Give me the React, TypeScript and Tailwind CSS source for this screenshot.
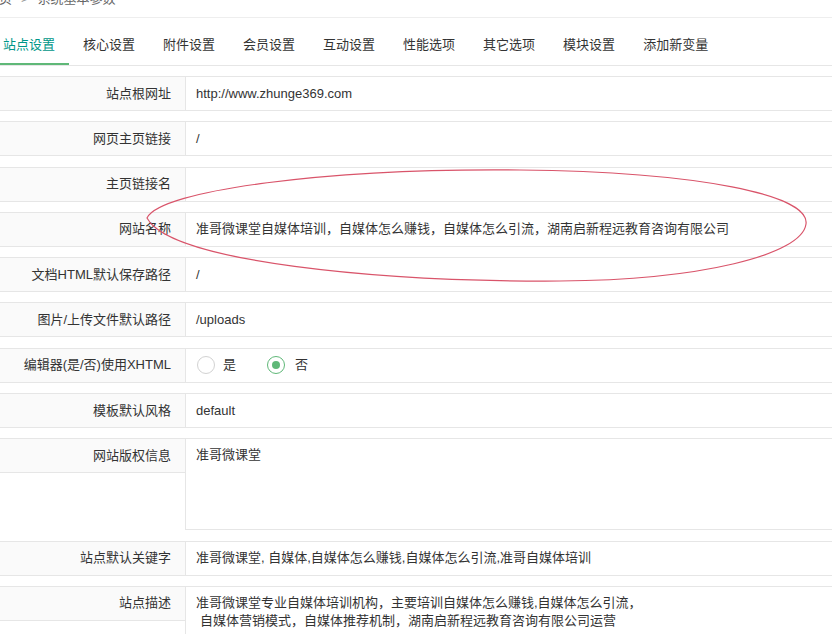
import React from "react";

const tabs = ["站点设置", "核心设置", "附件设置", "会员设置", "互动设置", "性能选项", "其它选项", "模块设置", "添加新变量"];

function Label({ text }: { text: string }) {
  return (
    <div className="w-[188px] h-[35px] shrink-0 flex items-center justify-end pr-[14px] bg-[#fafafa] border border-[#e6e6e6] text-[#333] leading-[18px]">
      {text}
    </div>
  );
}

function Row({ label, children }: { label: string; children?: React.ReactNode }) {
  return (
    <div className="flex mb-[10.3px]">
      <Label text={label} />
      <div className="flex-1 h-[35px] flex items-center px-[10px] border border-l-0 border-[#e6e6e6] bg-white text-[#333] leading-[18px] whitespace-nowrap">
        {children}
      </div>
    </div>
  );
}

function Radio({ checked, text, className }: { checked?: boolean; text: string; className?: string }) {
  return (
    <div className={"flex items-center " + (className ?? "")}>
      <span
        className={
          "w-[18px] h-[18px] rounded-full flex items-center justify-center " +
          (checked ? "border-[1.5px] border-[#5FB878]" : "border-[1.5px] border-[#d2d2d2]")
        }
      >
        {checked && <span className="w-[8px] h-[8px] rounded-full bg-[#5FB878]" />}
      </span>
      <span className={checked ? "ml-[10px]" : "ml-[8px]"}>{text}</span>
    </div>
  );
}

export default function App() {
  return (
    <div
      className="relative w-[832px] h-[634px] overflow-hidden bg-white text-[13px]"
      style={{ fontFamily: '"Liberation Sans", "Noto Sans CJK SC", sans-serif' }}
    >
      {/* breadcrumb, its top is cut off by the window */}
      <div className="flex items-start h-[18px] border-b border-[#eeeeee] -ml-[14px]">
        <div className="-mt-[9px] leading-[16px] text-[#666] flex">
          <span>首页</span>
          <span className="mx-[9px] text-[#999]">&gt;</span>
          <span>系统基本参数</span>
        </div>
      </div>

      {/* tabs */}
      <ul className="mt-[7px] -ml-[11px] flex h-[41px] border-b border-[#e6e6e6]">
        {tabs.map((t, i) => (
          <li
            key={t}
            className={
              "relative h-[40px] leading-[40px] px-[14px] whitespace-nowrap " +
              (i === 0 ? "text-[#009688]" : "text-[#333]")
            }
          >
            {t}
            {i === 0 && <span className="absolute left-0 right-0 bottom-0 h-[2px] bg-[#5FB878]" />}
          </li>
        ))}
      </ul>

      {/* form */}
      <div className="mt-[10px] -ml-[2px] w-[860px]">
        <Row label="站点根网址">http://www.zhunge369.com</Row>
        <Row label="网页主页链接">/</Row>
        <Row label="主页链接名" />
        <Row label="网站名称">准哥微课堂自媒体培训，自媒体怎么赚钱，自媒体怎么引流，湖南启新程远教育咨询有限公司</Row>
        <Row label="文档HTML默认保存路径">/</Row>
        <Row label="图片/上传文件默认路径">/uploads</Row>
        <Row label="编辑器(是/否)使用XHTML">
          <Radio text="是" className="ml-[1px]" />
          <Radio text="否" checked className="ml-[31px]" />
        </Row>
        <Row label="模板默认风格">default</Row>

        <div className="flex items-start mb-[10.3px]">
          <Label text="网站版权信息" />
          <div className="flex-1 -ml-[1px] h-[92px] px-[10px] pt-[7px] border border-[#e6e6e6] text-[#333] leading-[18px]">
            准哥微课堂
          </div>
        </div>

        <Row label="站点默认关键字">准哥微课堂, 自媒体,自媒体怎么赚钱,自媒体怎么引流,准哥自媒体培训</Row>

        <div className="flex items-start">
          <Label text="站点描述" />
          <div className="flex-1 -ml-[1px] h-[80px] px-[10px] pt-[7px] border border-[#e6e6e6] text-[#333] leading-[18px] whitespace-nowrap">
            <div>准哥微课堂专业自媒体培训机构，主要培训自媒体怎么赚钱,自媒体怎么引流，</div>
            <div className="pl-[4px]">自媒体营销模式，自媒体推荐机制，湖南启新程远教育咨询有限公司运营</div>
          </div>
        </div>
      </div>

      {/* hand-drawn highlight */}
      <svg className="absolute inset-0 pointer-events-none" width="832" height="634" viewBox="0 0 832 634">
        <path
          d="M147,218 C160,190 330,168 520,170 C700,172 810,195 806,224 C802,255 700,280 560,281 C380,282 170,262 147,218 Z"
          fill="none"
          stroke="#d9546a"
          strokeWidth="1.2"
        />
      </svg>
    </div>
  );
}
